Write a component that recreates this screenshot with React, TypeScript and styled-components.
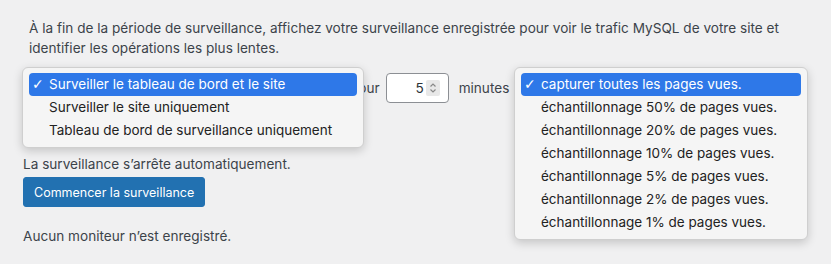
import React from 'react';
import styled, { createGlobalStyle } from 'styled-components';

const GlobalStyle = createGlobalStyle`
  body {
    margin: 0;
    background: #f0f0f1;
    font-family: Inter, "Liberation Sans", Arial, sans-serif;
    color: #3c434a;
  }
`;

const Page = styled.div`
  padding: 18px 0 0 23px;
  width: 831px;
  height: 264px;
  box-sizing: border-box;
  overflow: hidden;
`;

const Intro = styled.p`
  margin: 0 0 0 6px;
  font-size: 13.6px;
  line-height: 20px;
  width: 790px;
`;

const Row = styled.div`
  position: relative;
  display: flex;
  align-items: center;
  margin-top: 15px;
  height: 30px;
  font-size: 13.6px;
`;

const HiddenSelect = styled.div<{ $width: number }>`
  width: ${(p) => p.$width}px;
  height: 30px;
`;

const Label = styled.span<{ $gap: number }>`
  margin-right: ${(p) => p.$gap}px;
  color: #3c434a;
`;

const NumberBox = styled.div`
  width: 63px;
  height: 30px;
  box-sizing: border-box;
  background: #fff;
  border: 1px solid #8c8f94;
  border-radius: 4px;
  display: flex;
  align-items: center;
  justify-content: flex-end;
  padding-right: 8px;
  margin-right: 10px;
  color: #2c3338;
`;

const Spinner = styled.span`
  display: inline-flex;
  align-items: center;
  justify-content: center;
  width: 14px;
  height: 16px;
  background: #e8e8e8;
  border-radius: 2px;
  margin-left: 2px;
`;

const Menu = styled.div<{ $left: number; $width: number }>`
  position: absolute;
  top: -6px;
  left: ${(p) => p.$left}px;
  width: ${(p) => p.$width}px;
  box-sizing: border-box;
  padding: 5px 6px;
  background: #f5f5f5;
  border: 1px solid #cfcfcf;
  border-radius: 6px;
  box-shadow: 0 3px 10px rgba(0, 0, 0, 0.18);
  z-index: 2;
`;

const Option = styled.div<{ $selected?: boolean; $indent: number }>`
  position: relative;
  height: 23px;
  line-height: 23px;
  padding-left: ${(p) => p.$indent}px;
  font-size: 13.5px;
  border-radius: 4px;
  white-space: nowrap;
  color: ${(p) => (p.$selected ? '#fff' : '#222')};
  background: ${(p) => (p.$selected ? '#2e78e8' : 'transparent')};
`;

const Check = styled.span`
  position: absolute;
  left: 3px;
  top: 0;
  font-size: 14px;
  font-family: "DejaVu Sans", sans-serif;
  font-weight: bold;
`;

const Note = styled.p`
  margin: 51px 0 0;
  font-size: 13.6px;
  line-height: 20px;
`;

const Button = styled.button`
  display: block;
  margin-top: 3px;
  height: 30px;
  padding: 0 10px;
  border: 1px solid #2271b1;
  border-radius: 3px;
  background: #2271b1;
  color: #fff;
  font-family: Inter, "Liberation Sans", Arial, sans-serif;
  font-size: 12.5px;
`;

const Empty = styled.p`
  margin: 19px 0 0;
  font-size: 13.6px;
  line-height: 20px;
`;

const modes = [
  'Surveiller le tableau de bord et le site',
  'Surveiller le site uniquement',
  'Tableau de bord de surveillance uniquement',
];

const samples = [
  'capturer toutes les pages vues.',
  'échantillonnage 50% de pages vues.',
  'échantillonnage 20% de pages vues.',
  'échantillonnage 10% de pages vues.',
  'échantillonnage 5% de pages vues.',
  'échantillonnage 2% de pages vues.',
  'échantillonnage 1% de pages vues.',
];

const App = () => (
  <>
    <GlobalStyle />
    <Page>
      <Intro>
        À la fin de la période de surveillance, affichez votre surveillance enregistrée pour voir le trafic MySQL de votre
        site et identifier les opérations les plus lentes.
      </Intro>
      <Row>
        <HiddenSelect $width={327} />
        <Label $gap={6}>pour</Label>
        <NumberBox>
          5
          <Spinner>
            <svg width="8" height="12" viewBox="0 0 8 12" fill="none" stroke="#888" strokeWidth="1.2">
              <path d="M1.5 4.5 L4 2 L6.5 4.5" />
              <path d="M1.5 7.5 L4 10 L6.5 7.5" />
            </svg>
          </Spinner>
        </NumberBox>
        <Label $gap={8}>minutes</Label>
        <Menu $left={-1} $width={342}>
          {modes.map((m, i) => (
            <Option key={m} $selected={i === 0} $indent={20}>
              {i === 0 && <Check>✓</Check>}
              {m}
            </Option>
          ))}
        </Menu>
        <Menu $left={491} $width={294}>
          {samples.map((s, i) => (
            <Option key={s} $selected={i === 0} $indent={20}>
              {i === 0 && <Check>✓</Check>}
              {s}
            </Option>
          ))}
        </Menu>
      </Row>
      <Note>La surveillance s’arrête automatiquement.</Note>
      <Button>Commencer la surveillance</Button>
      <Empty>Aucun moniteur n’est enregistré.</Empty>
    </Page>
  </>
);

export default App;
